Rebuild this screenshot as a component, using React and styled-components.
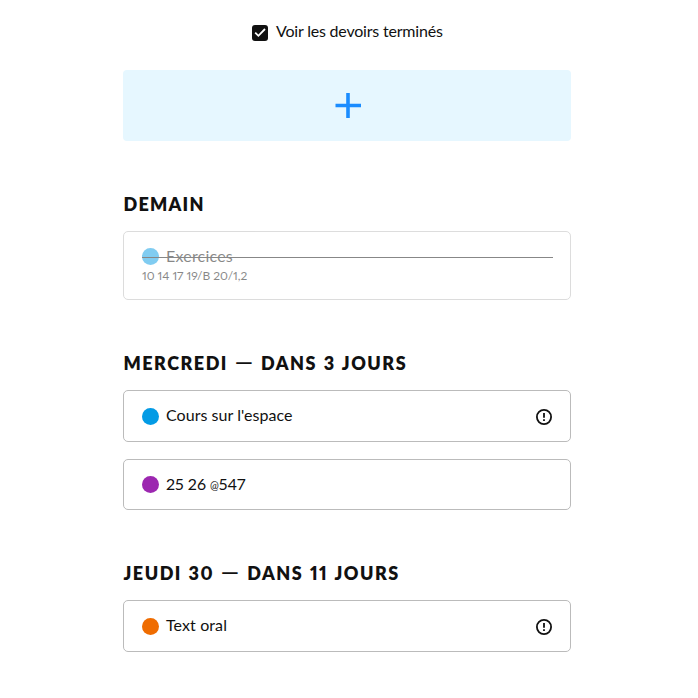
import React from 'react';
import styled, { createGlobalStyle } from 'styled-components';

const GlobalStyle = createGlobalStyle`
  * { box-sizing: border-box; }
  body {
    margin: 0;
    background: #fff;
    color: #111;
    font-family: Lato, "Open Sans", sans-serif;
    font-variant-numeric: proportional-nums;
  }
`;

const Page = styled.main`
  width: 448px;
  margin: 0 0 0 123px;
  padding-top: 19px;
  display: flex;
  flex-direction: column;
`;

const Toggle = styled.label`
  display: flex;
  align-items: center;
  height: 24px;
  margin-left: 129px;
  gap: 8px;
`;

const CheckBox = styled.span`
  display: flex;
  width: 16px;
  height: 16px;
  margin-top: 4px;
  border-radius: 3px;
  background: #111;
`;

const Label = styled.span`
  font-size: 16px;
  line-height: 24px;
  white-space: nowrap;
  letter-spacing: ${(p) => p.$tracking || 0}px;
`;

const AddButton = styled.button`
  display: flex;
  align-items: center;
  justify-content: center;
  height: 71px;
  margin: 27px 0 0;
  padding: 0 0 0 2px;
  border: 0;
  border-radius: 4px;
  background: #e6f7ff;
`;

const Section = styled.section`
  display: flex;
  flex-direction: column;
  margin-top: 51px;
`;

const Heading = styled.h2`
  margin: 0 0 15px 0.5px;
  font-size: 18px;
  line-height: 24px;
  font-weight: 800;
  white-space: nowrap;
  letter-spacing: ${(p) => p.$tracking}px;
  word-spacing: 1px;
`;

const Dash = styled.span`
  font-size: 23px;
  line-height: 0;
  font-weight: 500;
`;

const AtSign = styled.span`
  font-size: 10.5px;
  line-height: 0;
  vertical-align: 1px;
`;

const Card = styled.article`
  height: ${(p) => p.$height}px;
  padding: 12px 17px 0 18px;
  border: 1px solid #bbb;
  border-radius: 5px;
  opacity: ${(p) => (p.$done ? 0.5 : 1)};

  & + & { margin-top: 17px; }
`;

const Row = styled.div`
  position: relative;
  display: flex;
  align-items: center;
  height: 24px;
`;

const Dot = styled.span`
  width: 17px;
  height: 17px;
  margin: ${(p) => (p.$low ? 2 : 0)}px 7px 0 0;
  border-radius: 50%;
  background: ${(p) => p.$color};
`;

const Strike = styled.span`
  position: absolute;
  left: 0;
  right: 0;
  top: 13px;
  height: 1px;
  background: #111;
`;

const Note = styled.p`
  margin: 0;
  font-size: 12px;
  line-height: 16px;
  letter-spacing: ${(p) => p.$tracking}px;
`;

const AlertIcon = styled.svg`
  width: 18px;
  height: 18px;
  margin: 3px 0 0 auto;
`;

const sections = [
  {
    title: ['DEMAIN'], tracking: 1.25,
    items: [{ text: 'Exercices', tracking: 0.2, color: '#039be5', height: 69, done: true, note: '10 14 17 19/B 20/1,2', noteTracking: -0.05 }],
  },
  {
    title: ['MERCREDI', 'DANS 3 JOURS'], tracking: 1.5,
    items: [
      { text: "Cours sur l'espace", tracking: 0.05, color: '#039be5', height: 52, alert: true },
      { text: '25 26 @547', color: '#9c27b0', height: 51 },
    ],
  },
  {
    title: ['JEUDI 30', 'DANS 11 JOURS'], tracking: 1.5,
    items: [{ text: 'Text oral', tracking: 0.1, color: '#ef6c00', height: 52, alert: true }],
  },
];

function Homework({ item }) {
  const [before, after] = item.text.split('@');
  return (
    <Card $height={item.height} $done={item.done}>
      <Row>
        <Dot $color={item.color} $low={item.alert} />
        <Label $tracking={item.tracking}>
          {before}
          {after && <><AtSign>@</AtSign>{after}</>}
        </Label>
        {item.alert && (
          <AlertIcon viewBox="0 0 18 18" fill="none" stroke="#111">
            <circle cx="9" cy="9" r="7.1" strokeWidth="1.8" />
            <path d="M9 5v4.7M9 11.3v1.7" strokeWidth="1.8" />
          </AlertIcon>
        )}
        {item.done && <Strike />}
      </Row>
      {item.note && <Note $tracking={item.noteTracking}>{item.note}</Note>}
    </Card>
  );
}

export default function App() {
  return (
    <>
      <GlobalStyle />
      <Page>
        <Toggle>
          <CheckBox>
            <svg width="16" height="16" viewBox="0 0 16 16" fill="none" stroke="#fff" strokeWidth="1.8">
              <path d="M3.2 7.6l3.2 3.2 6.6-6.8" />
            </svg>
          </CheckBox>
          <Label $tracking={-0.2}>Voir les devoirs terminés</Label>
        </Toggle>
        <AddButton aria-label="Ajouter">
          <svg width="27" height="27" viewBox="0 0 27 27" fill="none" stroke="#1a8cff" strokeWidth="3.6">
            <path d="M0.5 13.5h25.5M13 1v25" />
          </svg>
        </AddButton>
        {sections.map((s) => (
          <Section key={s.title[0]}>
            <Heading $tracking={s.tracking}>
              {s.title[0]}
              {s.title[1] && <> <Dash>—</Dash> {s.title[1]}</>}
            </Heading>
            {s.items.map((item) => <Homework key={item.text} item={item} />)}
          </Section>
        ))}
      </Page>
    </>
  );
}
